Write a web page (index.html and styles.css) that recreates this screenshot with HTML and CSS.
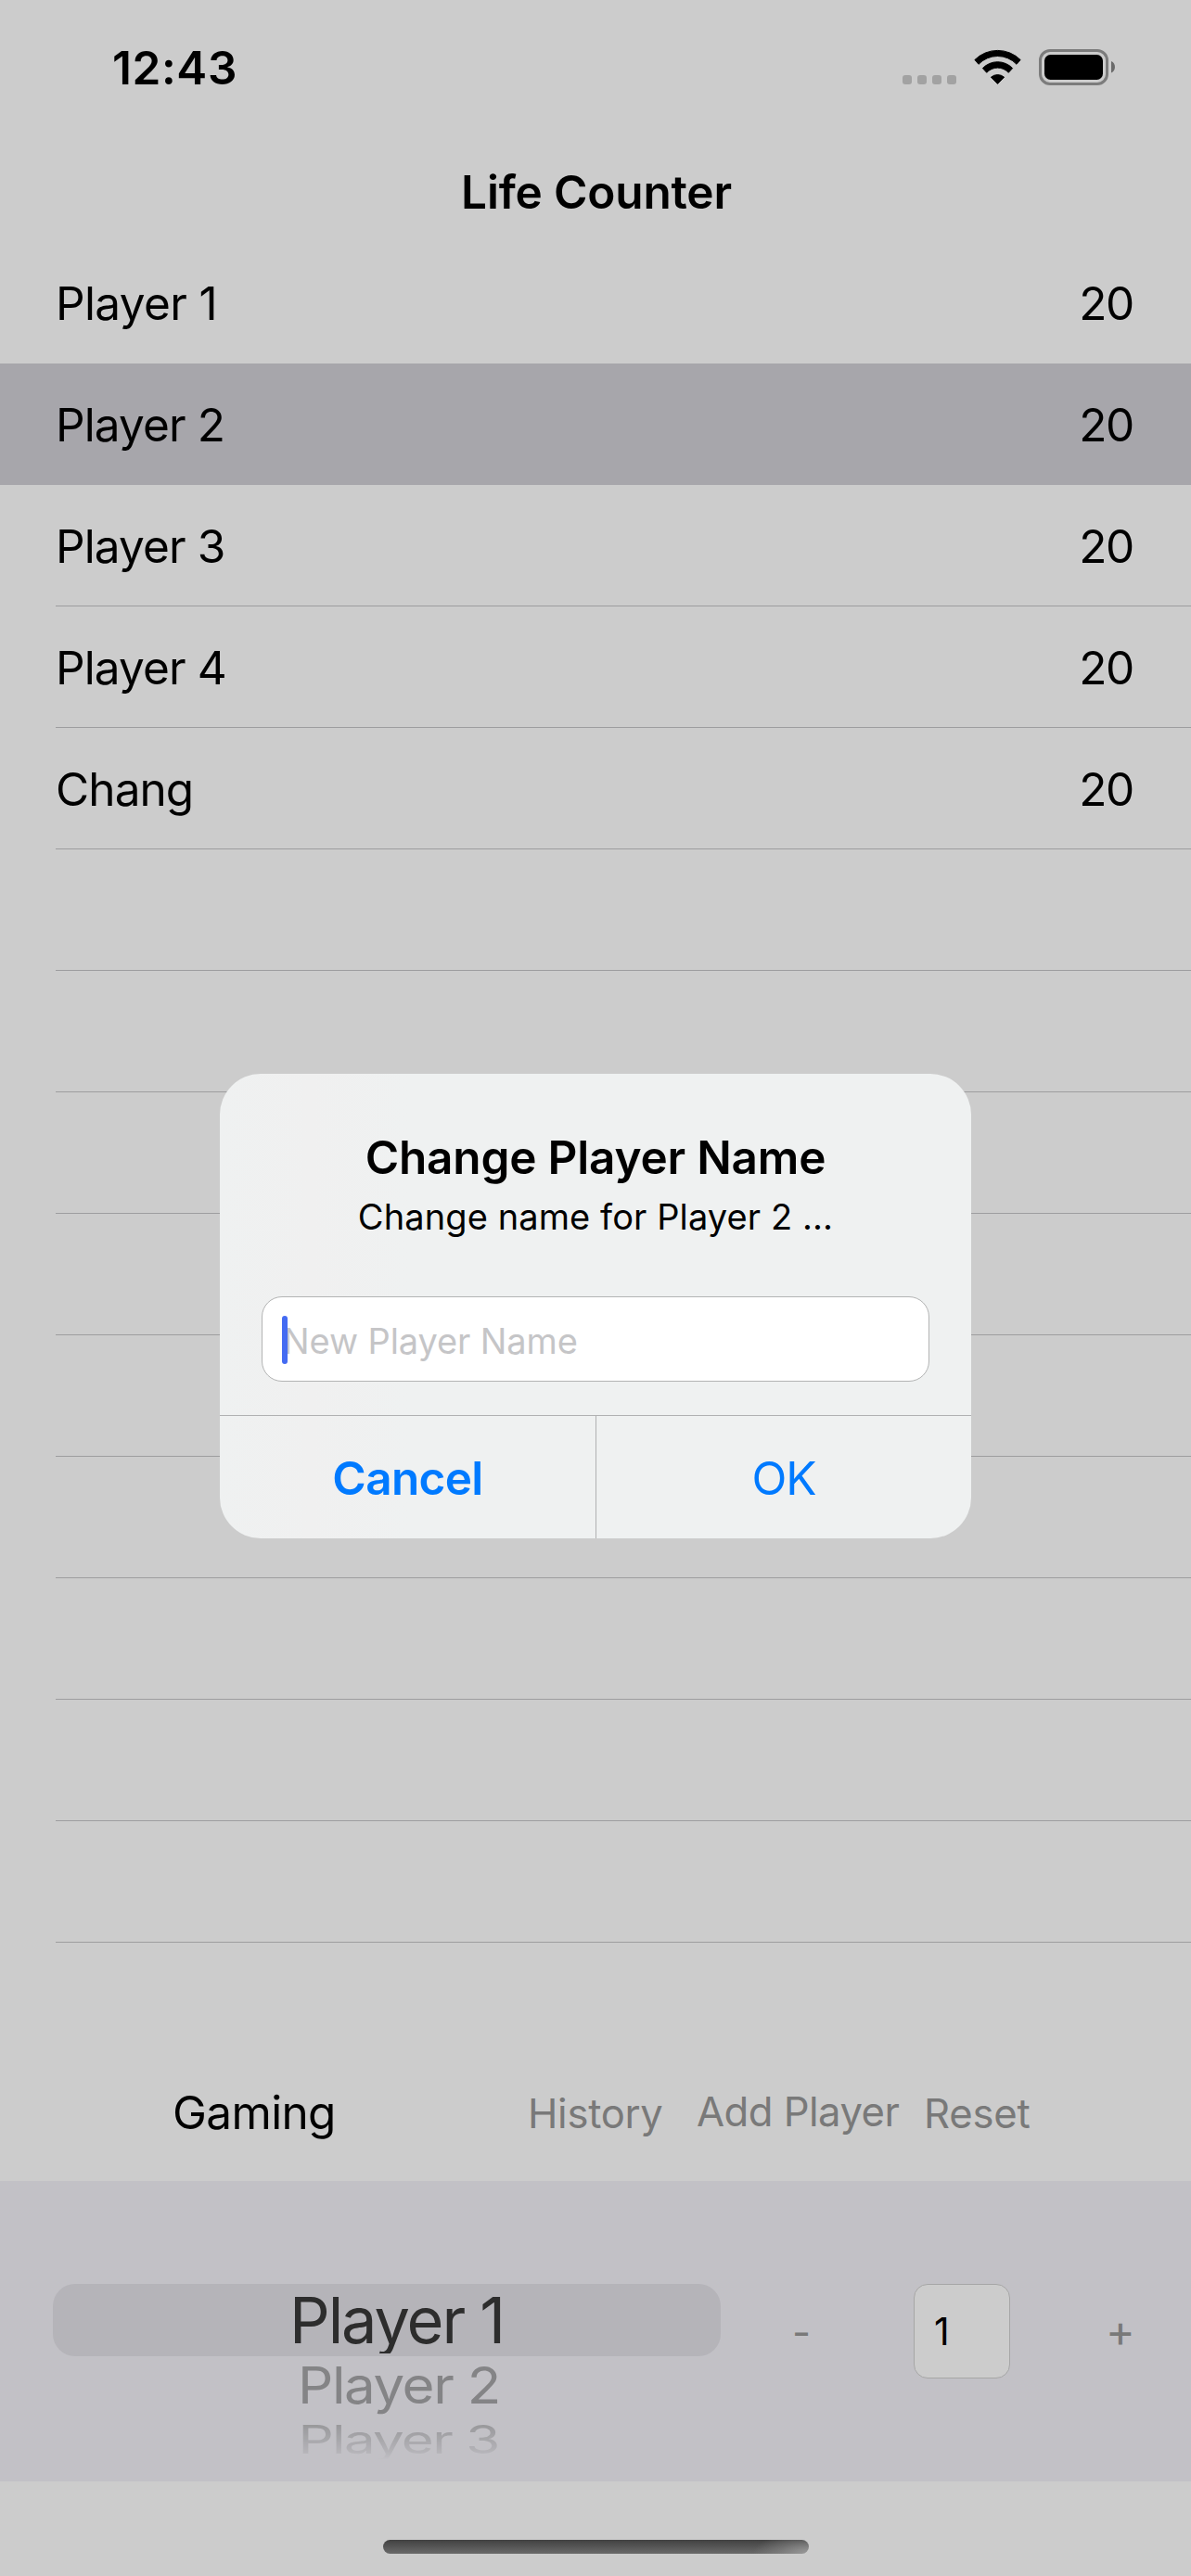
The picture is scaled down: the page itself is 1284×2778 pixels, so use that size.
FILE: index.html
```
<!DOCTYPE html>
<html lang="en">
<head>
<meta charset="utf-8">
<title>Life Counter</title>
<link rel="stylesheet" href="styles.css">
</head>
<body>
<div class="screen">
  <header class="status">
    <span class="clock">12:43</span>
    <svg class="status-icons" viewBox="970 50 240 45" width="240" height="45">
      <g fill="#a2a2a2">
        <rect x="973" y="81" width="10" height="10" rx="3"/>
        <rect x="989" y="81" width="10" height="10" rx="3"/>
        <rect x="1005" y="81" width="10" height="10" rx="3"/>
        <rect x="1021" y="81" width="10" height="10" rx="3"/>
      </g>
      <g stroke="#000" stroke-width="1" stroke-linejoin="round">
        <path d="M1050.9 64.5A35 35 0 0 1 1100.1 64.5L1096 69.3A28.3 28.3 0 0 0 1055 69.3Z"/>
        <path d="M1059.4 73.6A22.3 22.3 0 0 1 1091.6 73.6L1087.3 78.3A16 16 0 0 0 1063.7 78.3Z"/>
        <path d="M1068.4 83.2A11 11 0 0 1 1082.6 83.2L1075.5 90.4Z"/>
      </g>
      <rect x="1121.5" y="54.5" width="72" height="36" rx="10.5" fill="none" stroke="#7c7c7c" stroke-width="3"/>
      <rect x="1126" y="59" width="63" height="27" rx="6.5"/>
      <path d="M1198 66C1203.300 68 1203.300 76.500 1198 78.500Z" fill="#6a6a6a"/>
    </svg>
  </header>
  <h1 class="title">Life Counter</h1>

  <ul class="players">
    <li class="row plain one"><span>Player 1</span><span class="life">20</span></li>
    <li class="row selected"><span>Player 2</span><span class="life">20</span></li>
    <li class="row"><span>Player 3</span><span class="life">20</span></li>
    <li class="row"><span>Player 4</span><span class="life">20</span></li>
    <li class="row"><span>Chang</span><span class="life">20</span></li>
    <li class="row"></li><li class="row"></li><li class="row"></li>
    <li class="row"></li><li class="row"></li><li class="row"></li>
    <li class="row"></li><li class="row"></li><li class="row"></li>
  </ul>

  <nav class="toolbar">
    <span class="mode">Gaming</span>
    <span class="history">History</span>
    <span class="add">Add Player</span>
    <span class="reset">Reset</span>
  </nav>

  <section class="panel">
    <div class="picker">
      <div class="picked"><div class="picked-text">Player 1</div></div>
      <div class="next">Player 2</div>
      <div class="last">Player 3</div>
    </div>
    <div class="step minus">-</div>
    <div class="step amount">1</div>
    <div class="step plus">+</div>
  </section>

  <footer class="home"><div class="indicator"></div></footer>

  <div class="alert">
    <h2 class="alert-title">Change Player Name</h2>
    <p class="alert-text">Change name for Player 2 ...</p>
    <div class="field"><span class="caret"></span>New Player Name</div>
    <div class="actions">
      <div class="action cancel">Cancel</div>
      <div class="action ok">OK</div>
    </div>
  </div>
</div>
</body>
</html>
```
FILE: styles.css
```
* { box-sizing: border-box; }
body { margin: 0; background: #ccc; }
h1, h2, p, ul { margin: 0; padding: 0; font-weight: 400; }

.screen {
  position: relative;
  display: flex;
  flex-direction: column;
  width: 1284px;
  height: 2778px;
  overflow: hidden;
  background: #ccc;
  color: #000;
  font: 400 49.5px/60px Inter, "Liberation Sans", sans-serif;
  white-space: nowrap;
}

.status {
  display: flex;
  justify-content: space-between;
  height: 141px;
  padding: 43px 74px 0 121px;
}
.clock { font-weight: 600; letter-spacing: 0.6px; }
.status-icons { margin-top: 7px; }

.title {
  height: 120px;
  padding: 36px 0 0 2px;
  font-size: 49.5px;
  font-weight: 600;
  line-height: 60px;
  letter-spacing: -0.17px;
  text-align: center;
}

.players { height: 1947px; list-style: none; }
.row {
  display: flex;
  justify-content: space-between;
  height: 131px;
  margin-left: 60px;
  padding: 36px 62px 0 0;
  border-bottom: 1px solid #9d9d9f;
  letter-spacing: -0.9px;
}
.plain { border-bottom: 0; }
.one { letter-spacing: -0.65px; }
.selected {
  margin-left: 0;
  padding-left: 60px;
  border-bottom: 0;
  background: #a7a6ab;
}
.life { letter-spacing: -1.3px; }

.toolbar {
  display: grid;
  grid-template-columns: 383px 182px 245px auto;
  align-items: start;
  height: 144px;
  padding: 40px 0 0 186px;
  color: #797979;
  font-size: 43.6px;
}
.mode { color: #000; font-size: 49.5px; letter-spacing: -0.64px; }
.history { margin-top: 2px; letter-spacing: -0.28px; }
.add { margin-top: 0; letter-spacing: -0.5px; }
.reset { margin-top: 2px; letter-spacing: -0.2px; }

.panel {
  display: grid;
  grid-template-columns: 720px 208px 104px 195px;
  align-items: start;
  height: 324px;
  padding: 111px 0 0 57px;
  background: #c2c1c6;
}
.picker { text-align: center; }
.picked { height: 78px; border-radius: 24px; background: #b5b4b9; }
.picked-text {
  height: 75px;
  overflow: hidden;
  padding-left: 21px;
  color: #2d2d2d;
  font-size: 68.5px;
  line-height: 79px;
  letter-spacing: -2.1px;
}
.next, .last { font-size: 60px; transform-origin: top; }
.next {
  height: 67px;
  padding-left: 26px;
  color: #848486;
  line-height: 67px;
  letter-spacing: -1.4px;
  transform: scaleY(0.924);
}
.last {
  height: 66px;
  padding-left: 25px;
  color: #858587;
  line-height: 66px;
  letter-spacing: -1.7px;
  transform: scaleY(0.695);
  mask-image: linear-gradient(rgba(0,0,0,.8) 0, rgba(0,0,0,.66) 12px, rgba(0,0,0,.2) 53px, transparent 64px);
}
.step {
  height: 102px;
  color: #797979;
  font-size: 43.6px;
  line-height: 102px;
}
.minus { padding: 2px 0 0 77px; }
.amount {
  padding-left: 21px;
  border: 1px solid #a6a6a6;
  border-radius: 15px;
  background: #ccc;
  color: #000;
  font-size: 41px;
  line-height: 100px;
}
.plus { padding-left: 103px; font-size: 48px; }

.home { height: 102px; padding: 63px 0 0 413px; }
.indicator {
  width: 459px;
  height: 15px;
  border-radius: 8px;
  background:
    radial-gradient(ellipse 60px 24px at 100% 100%, rgba(160,160,160,.9), rgba(150,150,150,.4) 55%, rgba(150,150,150,0)),
    linear-gradient(#414141, #6a6a6a);
}

.alert {
  position: absolute;
  left: 237px;
  top: 1158px;
  width: 810px;
  height: 501px;
  padding-top: 60px;
  border-radius: 44px;
  overflow: hidden;
  background: linear-gradient(90deg, #eff1f1, #f0f0f0 12%, #eff1f1 25%, #eff1f1);
  text-align: center;
}
.alert-title {
  font-size: 49.5px;
  font-weight: 600;
  line-height: 60px;
  letter-spacing: -0.2px;
}
.alert-text {
  margin-top: 9px;
  font-size: 38px;
  line-height: 50px;
  letter-spacing: 0.1px;
}
.field {
  position: relative;
  height: 92px;
  margin: 61px 45px 36px;
  padding: 2px 0 0 22px;
  border: 1px solid #b3b4b4;
  border-radius: 22px;
  background: #fff;
  color: #c5c5c7;
  font-size: 38px;
  line-height: 90px;
  letter-spacing: -0.1px;
  text-align: left;
}
.caret {
  position: absolute;
  left: 21px;
  top: 20px;
  width: 6px;
  height: 52px;
  border-radius: 3px;
  background: #446bf2;
}
.actions {
  display: grid;
  grid-template-columns: 406px 404px;
  height: 133px;
  border-top: 1px solid #b0b1b2;
  color: #007aff;
  line-height: 134px;
}
.cancel {
  border-right: 1px solid #b0b1b2;
  font-weight: 600;
  letter-spacing: -0.66px;
}
.ok { letter-spacing: -1.15px; }
```
